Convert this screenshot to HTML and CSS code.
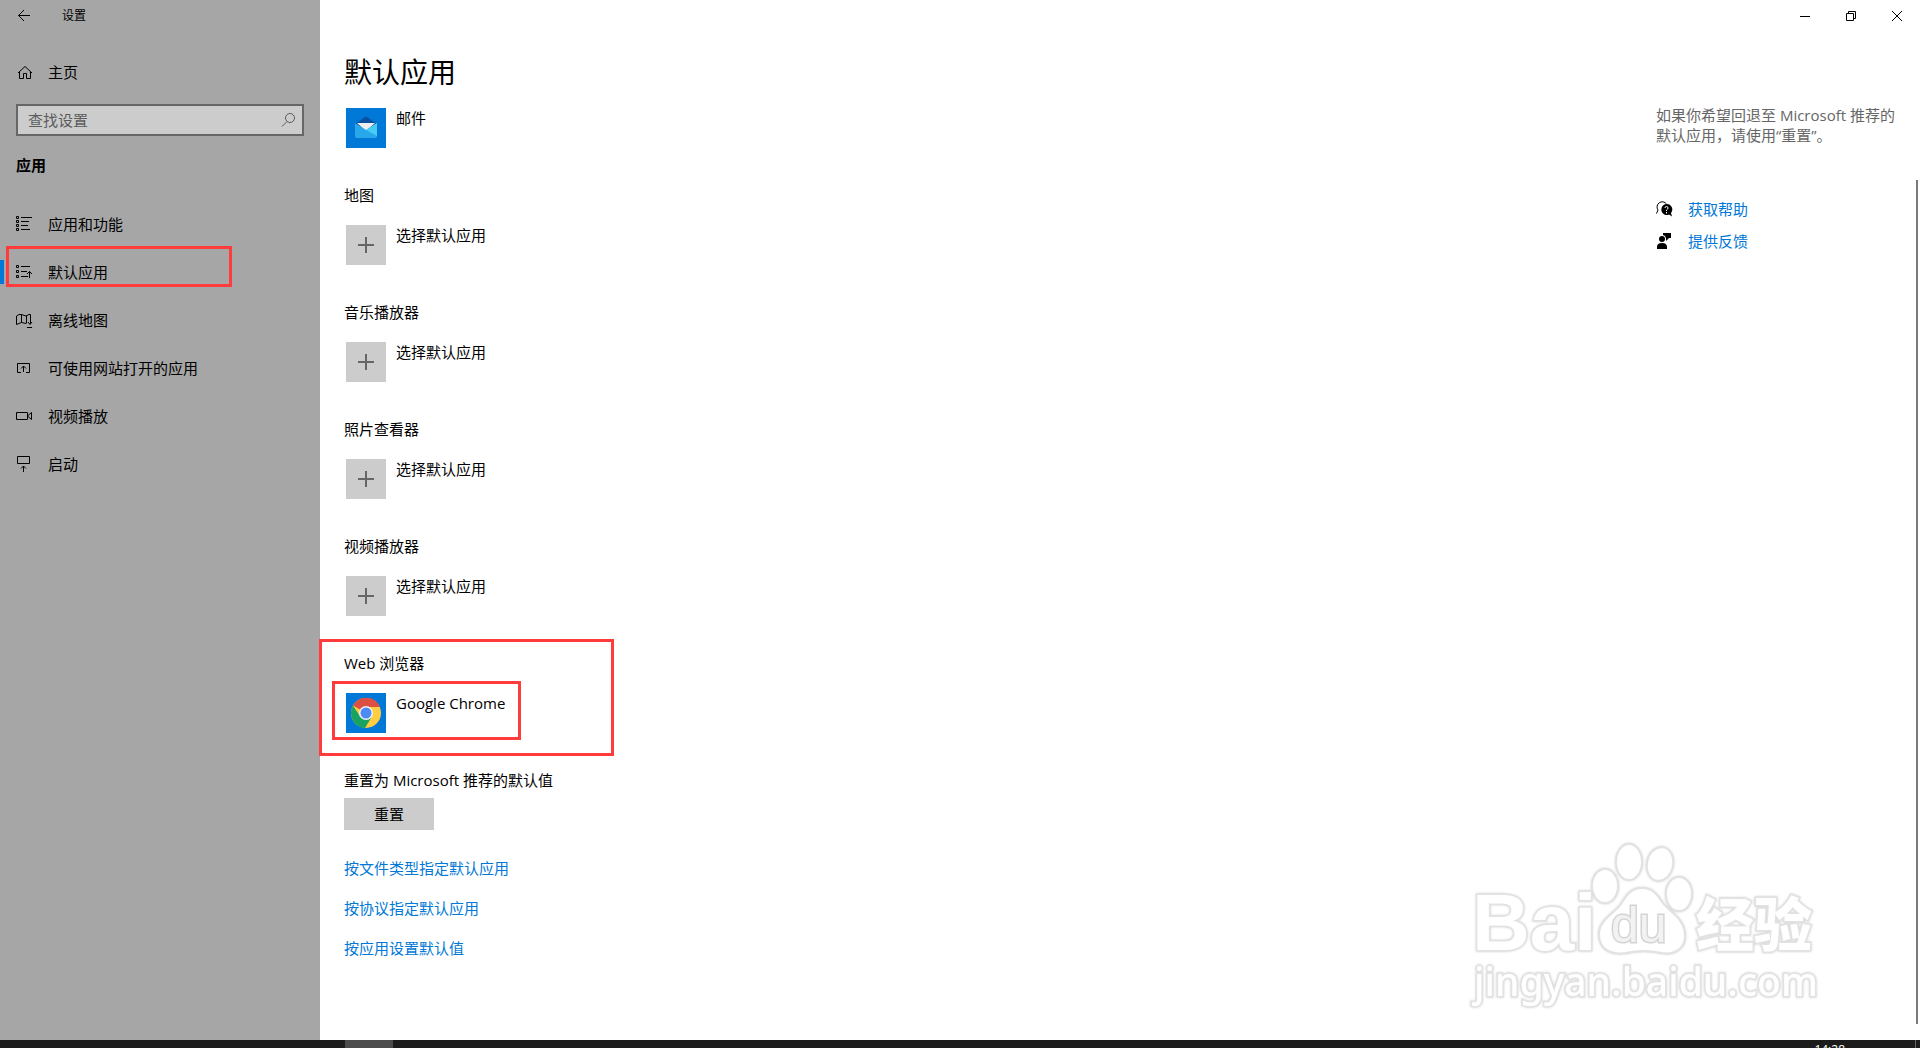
FILE: index.html
```html
<!DOCTYPE html>
<html lang="zh-CN">
<head>
    <meta charset="UTF-8">
    <meta name="viewport" content="width=device-width, initial-scale=1.0">
    <title>设置</title>
    <link rel="stylesheet" href="styles.css">
</head>

<body>
    <div class="window">
        <!-- 侧边栏 -->
        <aside class="sidebar">
            <div class="title-bar">
                <button class="back" aria-label="返回">
                    <svg class="icon" viewBox="0 0 16 16"><path d="M14 7.500H2.500M8 2L2.500 7.500L8 13"/></svg>
                </button>
                <span>设置</span>
            </div>
            <a class="nav-item" href="#home">
                <svg class="icon" viewBox="0 0 16 16"><path d="M2 9L9 2.500L16 9M3.500 8V14.500H7.500V9.500H10.500V14.500H14.500V8"/></svg>
                主页
            </a>
            <div class="search">
                <input type="text" id="searchText" aria-label="查找设置" placeholder="查找设置">
                <svg class="icon" viewBox="0 0 16 16"><circle cx="10" cy="6" r="4.500"/><path d="M7 9.500L2 14.500"/></svg>
            </div>
            <h2>应用</h2>
            <nav>
                <a class="nav-item" href="#features">
                    <svg class="icon" viewBox="0 0 16 16"><path d="M.5 .5h2v2h-2zM.5 4.500h2v2h-2zM.5 8.500h2v2h-2zM.5 12.500h2v2h-2zM5 1.500H16M5 5.500H13M5 9.500H12M5 13.500H14"/></svg>
                    应用和功能
                </a>
                <a class="nav-item active" href="#default">
                    <svg class="icon" viewBox="0 0 16 16"><path d="M.5 1.500h2v2h-2zM.5 6.500h2v2h-2zM.5 11.500h2v2h-2zM5 2.500H14M5 7.500H11M5 12.500H12M13.500 14V7.500M11 10L13.500 7.500L16 10"/></svg>
                    默认应用
                </a>
                <a class="nav-item" href="#maps">
                    <svg class="icon" viewBox="0 0 16 16"><path d="M10 11.500L5.500 10.500L.5 12.500V4L3 2.500H5.500L10 4L13 2.500H14.500V12M5.500 2.500V10.500M10.500 4V11.500M12 10L14 12.500L16 10M11 15.500H16"/></svg>
                    离线地图
                </a>
                <a class="nav-item" href="#websites">
                    <svg class="icon" viewBox="0 0 16 16"><path d="M5 12.500H1.500V3.500H13.500V12.500H10M7.500 12V6M5 8.500L7.500 6L10 8.500"/></svg>
                    可使用网站打开的应用
                </a>
                <a class="nav-item" href="#video">
                    <svg class="icon" viewBox="0 0 16 16"><path d="M.5 4.500H11.500V11.500H.5zM11.500 8L15.500 4.500V11.500L11.500 8"/></svg>
                    视频播放
                </a>
                <a class="nav-item" href="#startup">
                    <svg class="icon" viewBox="0 0 16 16"><path d="M1.500 .5H13.500V7.500H1.500zM7.500 16V10M5 12.500L7.500 10L10 12.500"/></svg>
                    启动
                </a>
            </nav>
        </aside>

        <!-- 默认应用 -->
        <main class="content">
            <h1>默认应用</h1>
            <section class="group">
                <button class="app">
                    <svg class="tile blue" viewBox="0 0 40 40">
                        <path fill="#0a50a0" d="M9 16L19 9Q20 8 21 9L31 16L20 22z"/>
                        <path fill="#eee" d="M11 15H29L20 23z"/>
                        <path fill="#28a8ea" d="M9 15L20 22L31 15V28Q31 30 29 30H11Q9 30 9 28z"/>
                        <path fill="#46cdf5" d="M31 15V28L20 22z"/>
                    </svg>
                    邮件
                </button>
            </section>
            <section class="group">
                <h3>地图</h3>
                <button class="app">
                    <svg class="tile" viewBox="0 0 40 40"><path d="M12 20H28M20 12V28"/></svg>
                    选择默认应用
                </button>
            </section>
            <section class="group">
                <h3>音乐播放器</h3>
                <button class="app">
                    <svg class="tile" viewBox="0 0 40 40"><path d="M12 20H28M20 12V28"/></svg>
                    选择默认应用
                </button>
            </section>
            <section class="group">
                <h3>照片查看器</h3>
                <button class="app">
                    <svg class="tile" viewBox="0 0 40 40"><path d="M12 20H28M20 12V28"/></svg>
                    选择默认应用
                </button>
            </section>
            <section class="group">
                <h3>视频播放器</h3>
                <button class="app">
                    <svg class="tile" viewBox="0 0 40 40"><path d="M12 20H28M20 12V28"/></svg>
                    选择默认应用
                </button>
            </section>
            <section class="group marked">
                <h3>Web 浏览器</h3>
                <button class="app">
                    <svg class="tile blue" viewBox="0 0 40 40">
                        <circle cx="20" cy="20" r="15" fill="#ffcd42"/>
                        <path fill="#dd4f43" d="M20 20L7 12.500A15 15 0 0 1 34 14H20z"/>
                        <path fill="#19a260" d="M7 12.500L14.500 24L20 27L19 35A15 15 0 0 1 7 12.500z"/>
                        <path fill="#19a260" d="M14 23L25 25L19 35L13 32z"/>
                        <circle cx="20" cy="20" r="7" fill="#f1f1f1"/>
                        <circle cx="20" cy="20" r="5.500" fill="#4c8bf5"/>
                    </svg>
                    Google Chrome
                </button>
            </section>
            <section class="reset">
                <h3>重置为 Microsoft 推荐的默认值</h3>
                <button class="reset-btn">重置</button>
            </section>
            <div class="links">
                <a href="#filetype">按文件类型指定默认应用</a>
                <a href="#protocol">按协议指定默认应用</a>
                <a href="#app">按应用设置默认值</a>
            </div>
        </main>

        <!-- 右侧帮助 -->
        <aside class="side">
            <div class="controls">
                <button aria-label="最小化"><svg viewBox="0 0 10 10"><path d="M0 5.500H10"/></svg></button>
                <button aria-label="还原"><svg viewBox="0 0 10 10"><path d="M.5 2.500H7.500V9.500H.5zM2.500 2.500V.5H9.500V7.500H7.500"/></svg></button>
                <button aria-label="关闭"><svg viewBox="0 0 10 10"><path d="M0 0L10 10M10 0L0 10"/></svg></button>
            </div>
            <div class="help">
                <p>如果你希望回退至 Microsoft 推荐的默认应用，请使用“重置”。</p>
                <a href="#help">
                    <svg class="icon" viewBox="0 0 16 16">
                        <path d="M.5 12.500L2 9A5 5 0 1 1 10.500 3"/>
                        <path class="solid" d="M10.500 3A5.500 5.500 0 1 0 13 13.500L16 15.500L15 12A5.500 5.500 0 0 0 10.500 3z"/>
                        <path class="mark" d="M9 7Q9 5.500 10.500 5.500T12 7Q12 8 10.500 9V10M10.500 11V12.500"/>
                    </svg>
                    获取帮助
                </a>
                <a href="#feedback">
                    <svg class="icon" viewBox="0 0 16 16">
                        <circle class="solid" cx="6" cy="6" r="3"/>
                        <path class="solid" d="M1 16V14Q1 10 6 10T11 14V16zM7 0H15V5H13L10 8V5Q9 2 7 2z"/>
                    </svg>
                    提供反馈
                </a>
            </div>
        </aside>
        <div class="scrollbar"></div>

        <!-- 水印 -->
        <svg class="watermark" viewBox="0 0 360 176" aria-hidden="true">
            <text class="wm-bai" x="2" y="110">Bai</text>
            <g class="paw">
                <ellipse cx="135" cy="46" rx="13" ry="17"/>
                <ellipse cx="159" cy="22" rx="13" ry="18"/>
                <ellipse cx="190" cy="24" rx="13" ry="17" transform="rotate(12 190 24)"/>
                <ellipse cx="209" cy="54" rx="13" ry="17"/>
                <path d="M172 48C182 48 187 54 192 62C199 72 215 78 215 96C215 109 204 115 192 113C178 110 168 110 156 113C140 115 129 109 129 94C129 80 144 74 151 64C157 54 162 48 172 48z"/>
            </g>
            <text class="wm-du" x="141" y="102">du</text>
            <text class="wm-cn" x="226" y="106">经验</text>
            <text class="wm-url" x="4" y="156">jingyan.baidu.com</text>
        </svg>
    </div>

    <!-- 任务栏 -->
    <footer class="taskbar">
        <span class="task"></span>
        <time class="clock">14:28</time>
        <span class="desktop"></span>
    </footer>
</body>

</html>
```
FILE: styles.css
```css
*, *::before, *::after {
    box-sizing: border-box;
}

body, h1, h2, h3, p {
    margin: 0;
}

body {
    display: flex;
    flex-direction: column;
    height: 100vh;
    overflow: hidden;
    background: #fff;
    color: #000;
    font-family: "Open Sans", "Noto Sans CJK SC", sans-serif;
    font-size: 15px;
    line-height: 20px;
}

h2, h3 {
    font-size: 15px;
}

h3 {
    font-weight: normal;
}

a {
    color: #0078d7;
    text-decoration: none;
}

button {
    padding: 0;
    border: none;
    background: none;
    color: inherit;
    font: inherit;
}

.icon {
    flex: none;
    width: 16px;
    height: 16px;
    overflow: visible;
    fill: none;
    stroke: #000;
}

.icon .solid {
    fill: #000;
    stroke: none;
}

.icon .mark {
    stroke: #fff;
}

.window {
    position: relative;
    display: flex;
    flex: 1;
    min-height: 0;
}

/* 侧边栏 */
.sidebar {
    flex: none;
    width: 320px;
    background: #a6a6a6;
}

.title-bar {
    display: flex;
    align-items: center;
    gap: 30px;
    height: 32px;
    margin-bottom: 16px;
    padding-left: 16px;
    font-size: 12px;
}

.back {
    display: flex;
}

.nav-item {
    display: flex;
    align-items: center;
    gap: 16px;
    height: 48px;
    padding-left: 16px;
    color: #000;
}

.search {
    display: flex;
    align-items: center;
    height: 32px;
    margin: 8px 16px 19px;
    padding: 0 6px 0 10px;
    border: 2px solid #666;
    background: #ccc;
}

.search input {
    flex: 1;
    min-width: 0;
    padding: 0;
    border: none;
    outline: none;
    background: none;
    font: inherit;
}

.search input::placeholder {
    color: #5c5c5c;
}

.search .icon {
    stroke: #5c5c5c;
}

.sidebar h2 {
    margin: 0 16px 25px;
}

.active {
    position: relative;
}

/* 当前项的蓝条 */
.active::before {
    content: "";
    position: absolute;
    left: 0;
    top: 12px;
    width: 4px;
    height: 24px;
    background: #0078d7;
}

/* 红色标注框 */
.active::after,
.marked::after,
.marked .app::after {
    content: "";
    position: absolute;
    border: 3px solid #ff3b3b;
}

.active::after {
    left: 6px;
    top: -2px;
    width: 226px;
    height: 41px;
}

/* 主内容 */
.content {
    flex: 1;
    padding: 52px 24px 0;
}

h1 {
    margin-bottom: 16px;
    font-size: 28px;
    font-weight: normal;
    line-height: 40px;
}

.group {
    margin-bottom: 37px;
}

.group h3 {
    margin-bottom: 20px;
}

.app {
    display: flex;
    gap: 10px;
    margin-left: 2px;
}

.tile {
    width: 40px;
    height: 40px;
    background: #ccc;
    stroke: #666;
    stroke-width: 2;
}

.blue {
    background: #0078d7;
    stroke: none;
}

.marked,
.marked .app {
    position: relative;
}

.marked::after {
    left: -25px;
    top: -14px;
    width: 295px;
    height: 117px;
}

.marked .app::after {
    left: -14px;
    top: -12px;
    width: 189px;
    height: 59px;
}

.reset-btn {
    width: 90px;
    height: 32px;
    margin-top: 8px;
    background: #ccc;
}

.links {
    display: flex;
    flex-direction: column;
    align-items: flex-start;
    gap: 20px;
    margin-top: 28px;
}

/* 右侧 */
.side {
    flex: none;
    width: 264px;
}

.controls {
    display: flex;
    justify-content: flex-end;
    height: 32px;
}

.controls button {
    display: flex;
    align-items: center;
    justify-content: center;
    width: 46px;
}

.controls svg {
    width: 10px;
    height: 10px;
    fill: none;
    stroke: #000;
}

.help {
    padding: 73px 24px 0 0;
}

.help p {
    margin-bottom: 54px;
    color: #666;
}

.help a {
    display: flex;
    align-items: center;
    gap: 16px;
    margin-bottom: 12px;
}

.scrollbar {
    position: absolute;
    top: 180px;
    right: 2px;
    bottom: 16px;
    width: 2px;
    background: #7a7a7a;
}

/* 水印 */
.watermark {
    position: absolute;
    right: 90px;
    bottom: 24px;
    width: 360px;
    height: 176px;
    fill: #fff;
    stroke: #e2e2e2;
    stroke-width: 3;
    paint-order: stroke;
    filter: drop-shadow(0 0 1px #d0d0d0);
    pointer-events: none;
}

.paw {
    stroke-width: 2;
    paint-order: normal;
}

.wm-bai {
    font: bold 80px "Liberation Sans", sans-serif;
}

.wm-du {
    fill: #f2f2f2;
    stroke: #d4d4d4;
    font: 50px "Liberation Sans", sans-serif;
}

.wm-cn {
    font: 900 58px "Noto Sans CJK SC", sans-serif;
}

.wm-url {
    font: 500 39px "Noto Sans", sans-serif;
}

/* 任务栏 */
.taskbar {
    display: flex;
    flex: none;
    height: 8px;
    overflow: hidden;
    background: #1c1c1c;
    color: #fff;
    font-size: 12px;
}

.task {
    width: 48px;
    margin-left: 345px;
    background: #4c4c4c;
}

.clock {
    margin-left: auto;
}

.desktop {
    width: 5px;
    margin-left: 70px;
    border-left: 1px solid #666;
}
```
